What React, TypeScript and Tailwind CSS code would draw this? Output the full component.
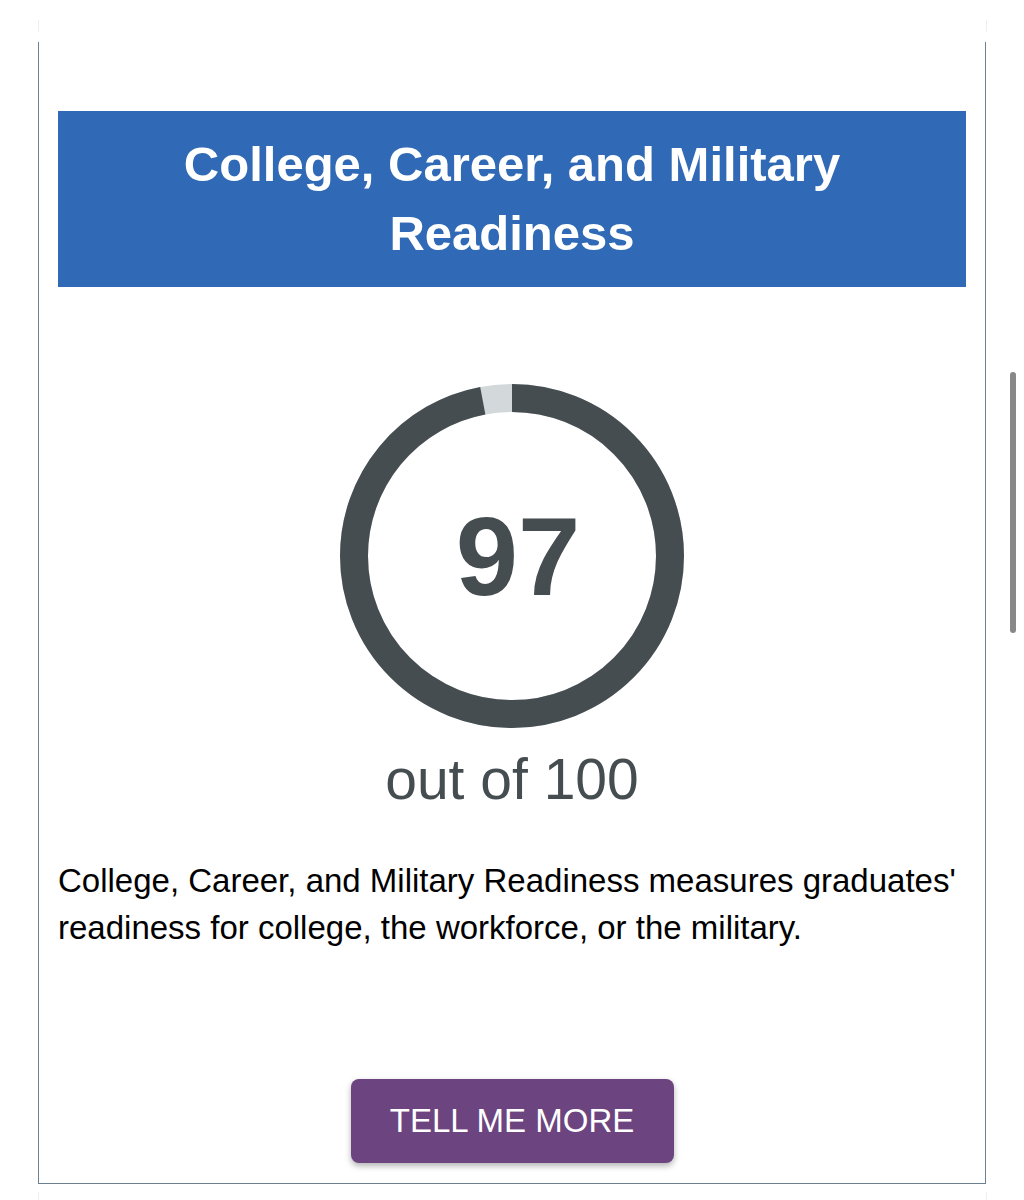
const SCORE = 97;

function ScoreRing({ value }: { value: number }) {
  const r = 158;
  const c = 2 * Math.PI * r;
  const filled = (value / 100) * c;
  return (
    <div className="relative h-[346px] w-[346px]">
      <svg width="346" height="346" viewBox="0 0 346 346" className="absolute inset-0">
        <circle cx="173" cy="173" r={r} fill="none" stroke="#d3d8da" strokeWidth="28" />
        <circle
          cx="173"
          cy="173"
          r={r}
          fill="none"
          stroke="#454d50"
          strokeWidth="28"
          strokeDasharray={`${filled} ${c}`}
          transform="rotate(-90 173 173)"
        />
      </svg>
      <div className="absolute inset-0 flex items-center justify-center pl-[12px] pt-[2px]">
        <span className="text-[112px] font-bold leading-none text-[#454d50]">{value}</span>
      </div>
    </div>
  );
}

export default function App() {
  return (
    <div className="relative min-h-[1200px] bg-white font-['Liberation_Sans',Arial,sans-serif]">
      <div className="px-[38px] pt-[20px]">
        <div className="mx-auto h-[12px] w-[949px] border-x border-[#eceef0]" />
        <div className="mt-[10px] w-[948px] border-x border-b border-[#6b8090] px-[19px] pb-[20px] pt-[69px]">
          <div className="flex h-[176px] items-center justify-center bg-[#3069b5] px-6 text-center text-[49px] font-bold leading-[69px] text-white">
            College, Career, and Military
            <br />
            Readiness
          </div>

          <div className="mt-[96px] flex flex-col items-center">
            <ScoreRing value={SCORE} />
            <div className="mt-[20px] text-[57px] leading-[60px] text-[#454d50]">out of 100</div>
          </div>

          <p className="mt-[48px] text-[33px] leading-[47px] text-black">
            College, Career, and Military Readiness measures graduates' readiness for college, the workforce, or the military.
          </p>

          <div className="mt-[128px] flex justify-center">
            <button className="h-[84px] w-[323px] rounded-lg bg-[#6c4580] text-[33px] text-white shadow-[0_3px_6px_rgba(0,0,0,0.3)]">
              TELL ME MORE
            </button>
          </div>
        </div>
        <div className="mx-auto mt-[8px] h-[8px] w-[949px] border-x border-[#eceef0]" />
      </div>

      <div className="absolute right-[8px] top-[372px] h-[261px] w-[6px] rounded-full bg-[#888888]" />
    </div>
  );
}
